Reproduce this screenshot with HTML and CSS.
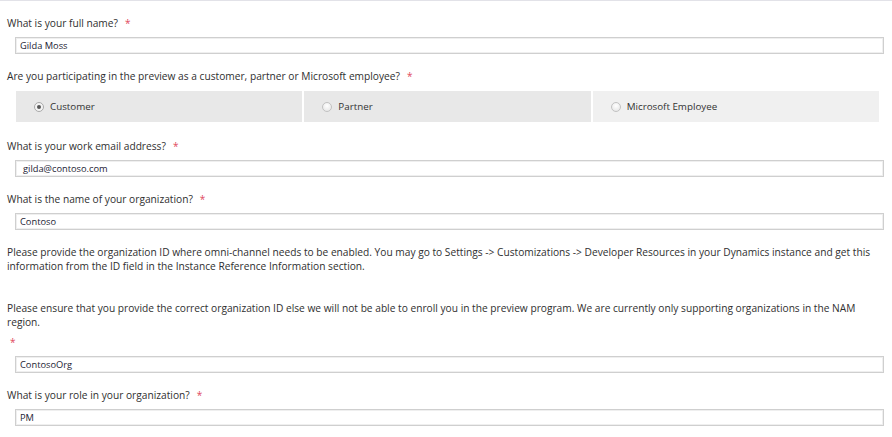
FILE: index.html
```html
<!DOCTYPE html>
<html lang="en">
<head>
<meta charset="utf-8">
<title>Preview sign-up</title>
<link rel="stylesheet" href="styles.css">
</head>
<body>
<form class="form">
  <div class="field">
    <label class="label">What is your full name?<span class="req">*</span></label>
    <div class="input">Gilda Moss</div>
  </div>
  <div class="field">
    <label class="label">Are you participating in the preview as a customer, partner or Microsoft employee?<span class="req">*</span></label>
    <div class="choices">
      <div class="choice"><span class="radio checked"></span>Customer</div>
      <div class="choice"><span class="radio"></span>Partner</div>
      <div class="choice light"><span class="radio"></span>Microsoft Employee</div>
    </div>
  </div>
  <div class="field">
    <label class="label">What is your work email address?<span class="req">*</span></label>
    <div class="input email">gilda@contoso.com</div>
  </div>
  <div class="field">
    <label class="label">What is the name of your organization?<span class="req">*</span></label>
    <div class="input">Contoso</div>
  </div>
  <div class="field info">
    <p class="para">Please provide the organization ID where omni-channel needs to be enabled. You may go to Settings -&gt; Customizations -&gt; Developer Resources in your Dynamics instance and get this information from the ID field in the Instance Reference Information section.</p>
    <p class="para second">Please ensure that you provide the correct organization ID else we will not be able to enroll you in the preview program. We are currently only supporting organizations in the NAM region.</p>
    <label class="label star-only"><span class="req solo">*</span></label>
    <div class="input">ContosoOrg</div>
  </div>
  <div class="field">
    <label class="label">What is your role in your organization?<span class="req">*</span></label>
    <div class="input">PM</div>
  </div>
</form>
</body>
</html>
```

FILE: styles.css
```css
html, body {
  margin: 0;
  padding: 0;
  background: #ffffff;
}

.form {
  border-top: 1px solid #e2e2e8;
  padding: 0 8px 0 7px;
  font-family: "Open Sans", "Noto Sans", sans-serif;
  color: #333333;
}

.field {
  display: flex;
  flex-direction: column;
  padding-top: 14px;
}

.field.info {
  padding-top: 15px;
}

.label {
  display: block;
  font-size: 10.2px;
  line-height: 16px;
  height: 16px;
  margin-bottom: 6px;
  color: #2f2f2f;
}

.req {
  color: #e0485c;
  font-size: 10px;
  margin-left: 7px;
}

.req.solo {
  margin-left: 3px;
}

.star-only {
  margin-top: 5px;
}

.input {
  margin-left: 8px;
  height: 15px;
  border: 1px solid #cfcfcf;
  box-shadow: inset 0 0 0 1px #efefef;
  padding-left: 4px;
  font-size: 9.3px;
  line-height: 15px;
  color: #1c1c34;
}

.input.email {
  padding-left: 7px;
}

.choices {
  display: grid;
  grid-template-columns: repeat(3, 1fr);
  column-gap: 2px;
  margin: 1px 5px 2px 9px;
  height: 31px;
}

.choice {
  display: flex;
  align-items: center;
  background: #e8e8e8;
  padding-left: 18px;
  font-size: 9.8px;
  color: #333333;
}

.choice.light {
  background: #f0f0f0;
}

.radio {
  width: 10px;
  height: 10px;
  border-radius: 50%;
  border: 1px solid #c2c2c2;
  background: radial-gradient(circle at 50% 35%, #ffffff 0%, #e2e2e2 100%);
  margin-right: 6px;
  box-sizing: border-box;
  position: relative;
  flex: none;
}

.radio.checked {
  background: #f4f4f4;
  border-color: #a9a9a9;
}

.radio.checked::after {
  content: "";
  position: absolute;
  left: 2px;
  top: 2px;
  width: 4px;
  height: 4px;
  border-radius: 50%;
  background: #555555;
}

.para {
  margin: 0;
  font-size: 10.2px;
  line-height: 14px;
  color: #2f2f2f;
}

.para.second {
  margin-top: 28px;
}
```
